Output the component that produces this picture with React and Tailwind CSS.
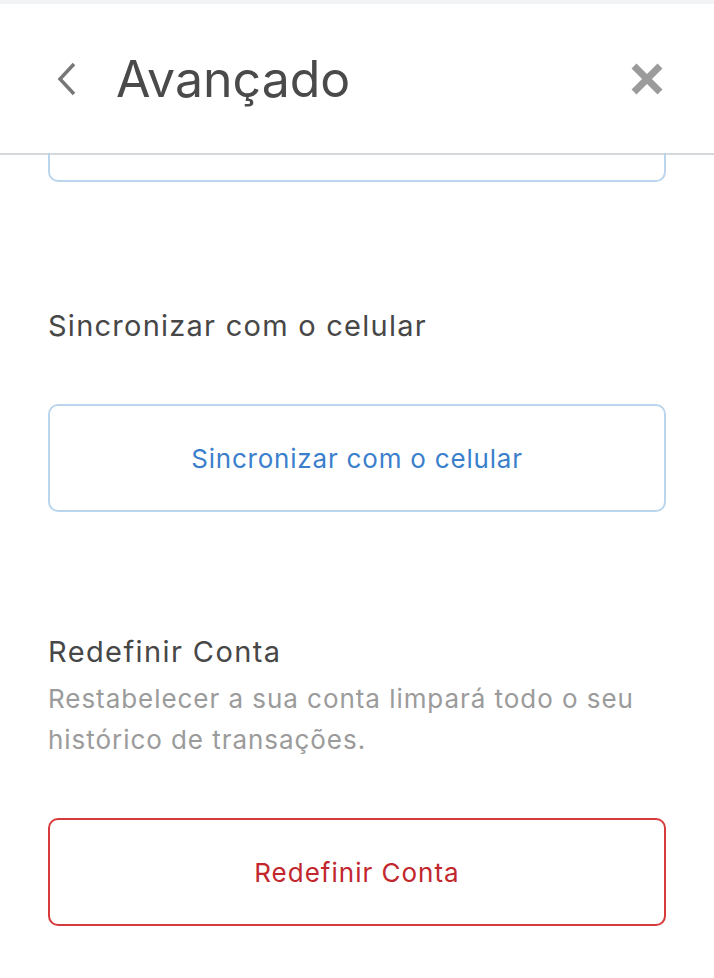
export default function App() {
  return (
    <div className="min-h-screen bg-white font-['Inter',sans-serif]">
      <div className="h-[4px] bg-[#f2f3f4]" />
      <header className="flex h-[151px] items-center border-b-2 border-[#d6d9dc] pl-[54px] pr-[50px]">
        <svg width="26" height="34" viewBox="0 0 26 34" className="mr-[36px]">
          <path d="M20 2 L6 17 L20 32" fill="none" stroke="#777" strokeWidth="3.5" />
        </svg>
        <h1 className="flex-1 text-[50px] leading-none text-[#4a4a4a]">Avançado</h1>
        <svg width="34" height="34" viewBox="0 0 34 34">
          <path d="M4 4 L30 30 M30 4 L4 30" stroke="#9b9b9b" strokeWidth="7" />
        </svg>
      </header>

      <main className="px-[48px]">
        <div className="-mt-[2px] h-[29px] rounded-b-[10px] border-2 border-t-0 border-[#bbd6ec]" />

        <section className="pt-[124px]">
          <h2 className="text-[29px] leading-[40px] tracking-[1.25px] text-[#474747]">Sincronizar com o celular</h2>
          <button className="mt-[58px] flex h-[108px] w-full items-center justify-center rounded-[10px] border-2 border-[#bbd6ec] text-[26px] tracking-[0.8px] text-[#3b7fcc]">
            Sincronizar com o celular
          </button>
        </section>

        <section className="pt-[120px]">
          <h2 className="text-[29px] leading-[40px] tracking-[1.4px] text-[#474747]">Redefinir Conta</h2>
          <p className="mt-[6px] text-[26px] leading-[41px] tracking-[0.95px] text-[#9b9b9b]">
            Restabelecer a sua conta limpará todo o seu histórico de transações.
          </p>
          <button className="mt-[58px] flex h-[108px] w-full items-center justify-center rounded-[10px] border-2 border-[#d73a3a] text-[26px] tracking-[1px] text-[#c1272d]">
            Redefinir Conta
          </button>
        </section>
      </main>
    </div>
  );
}
